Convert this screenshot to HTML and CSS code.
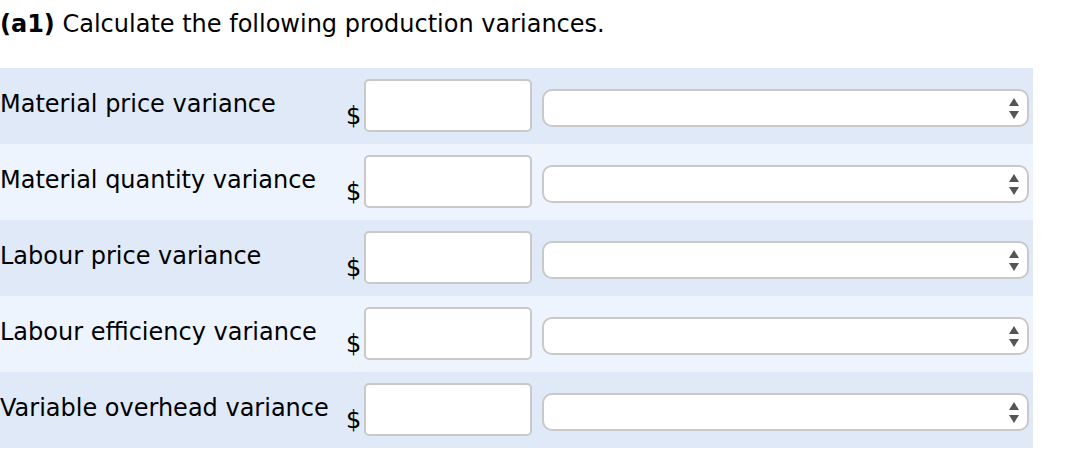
FILE: index.html
```html
<!DOCTYPE html>
<html>
<head>
<meta charset="utf-8">
<link rel="stylesheet" href="styles.css">
</head>
<body>
<div class="title"><b>(a1)</b> Calculate the following production variances.</div>
<div class="table">
  <div class="row odd">
    <div class="label">Material price variance</div>
    <div class="dollar">$</div>
    <div class="input"></div>
    <div class="select"><svg class="arrows" width="10" height="21" viewBox="0 0 10 21"><polygon points="5,0 10,8 0,8"/><polygon points="0,13 10,13 5,21"/></svg></div>
  </div>
  <div class="row even">
    <div class="label">Material quantity variance</div>
    <div class="dollar">$</div>
    <div class="input"></div>
    <div class="select"><svg class="arrows" width="10" height="21" viewBox="0 0 10 21"><polygon points="5,0 10,8 0,8"/><polygon points="0,13 10,13 5,21"/></svg></div>
  </div>
  <div class="row odd">
    <div class="label">Labour price variance</div>
    <div class="dollar">$</div>
    <div class="input"></div>
    <div class="select"><svg class="arrows" width="10" height="21" viewBox="0 0 10 21"><polygon points="5,0 10,8 0,8"/><polygon points="0,13 10,13 5,21"/></svg></div>
  </div>
  <div class="row even">
    <div class="label">Labour efficiency variance</div>
    <div class="dollar">$</div>
    <div class="input"></div>
    <div class="select"><svg class="arrows" width="10" height="21" viewBox="0 0 10 21"><polygon points="5,0 10,8 0,8"/><polygon points="0,13 10,13 5,21"/></svg></div>
  </div>
  <div class="row odd">
    <div class="label">Variable overhead variance</div>
    <div class="dollar">$</div>
    <div class="input"></div>
    <div class="select"><svg class="arrows" width="10" height="21" viewBox="0 0 10 21"><polygon points="5,0 10,8 0,8"/><polygon points="0,13 10,13 5,21"/></svg></div>
  </div>
</div>
</body>
</html>
```
FILE: styles.css
```css
html, body {
  margin: 0;
  padding: 0;
  background: #ffffff;
}
body {
  font-family: "DejaVu Sans", Verdana, sans-serif;
  font-size: 24px;
  line-height: 28px;
  color: #000000;
}
.title {
  padding-top: 10px;
  margin-bottom: 30px;
  height: 28px;
  white-space: nowrap;
}
.title b {
  font-weight: bold;
}
.table {
  width: 1033px;
}
.row {
  display: flex;
  align-items: flex-start;
  height: 76px;
  box-sizing: border-box;
}
.row.odd {
  background: #dfe9f8;
}
.row.even {
  background: #edf4fe;
}
.label {
  width: 346px;
  margin-top: 22px;
  white-space: nowrap;
}
.dollar {
  width: 18px;
  margin-top: 34px;
}
.input {
  width: 168px;
  height: 53px;
  margin-top: 11px;
  box-sizing: border-box;
  border: 2px solid #c9c9c9;
  border-radius: 5px;
  background: #ffffff;
}
.select {
  width: 487px;
  height: 38px;
  margin-top: 21px;
  margin-left: 10px;
  box-sizing: border-box;
  border: 2px solid #c9c9c9;
  border-radius: 10px;
  background: #ffffff;
  display: flex;
  align-items: center;
  justify-content: flex-end;
  padding-right: 8px;
}
.arrows {
  display: block;
  fill: #555555;
}
```
